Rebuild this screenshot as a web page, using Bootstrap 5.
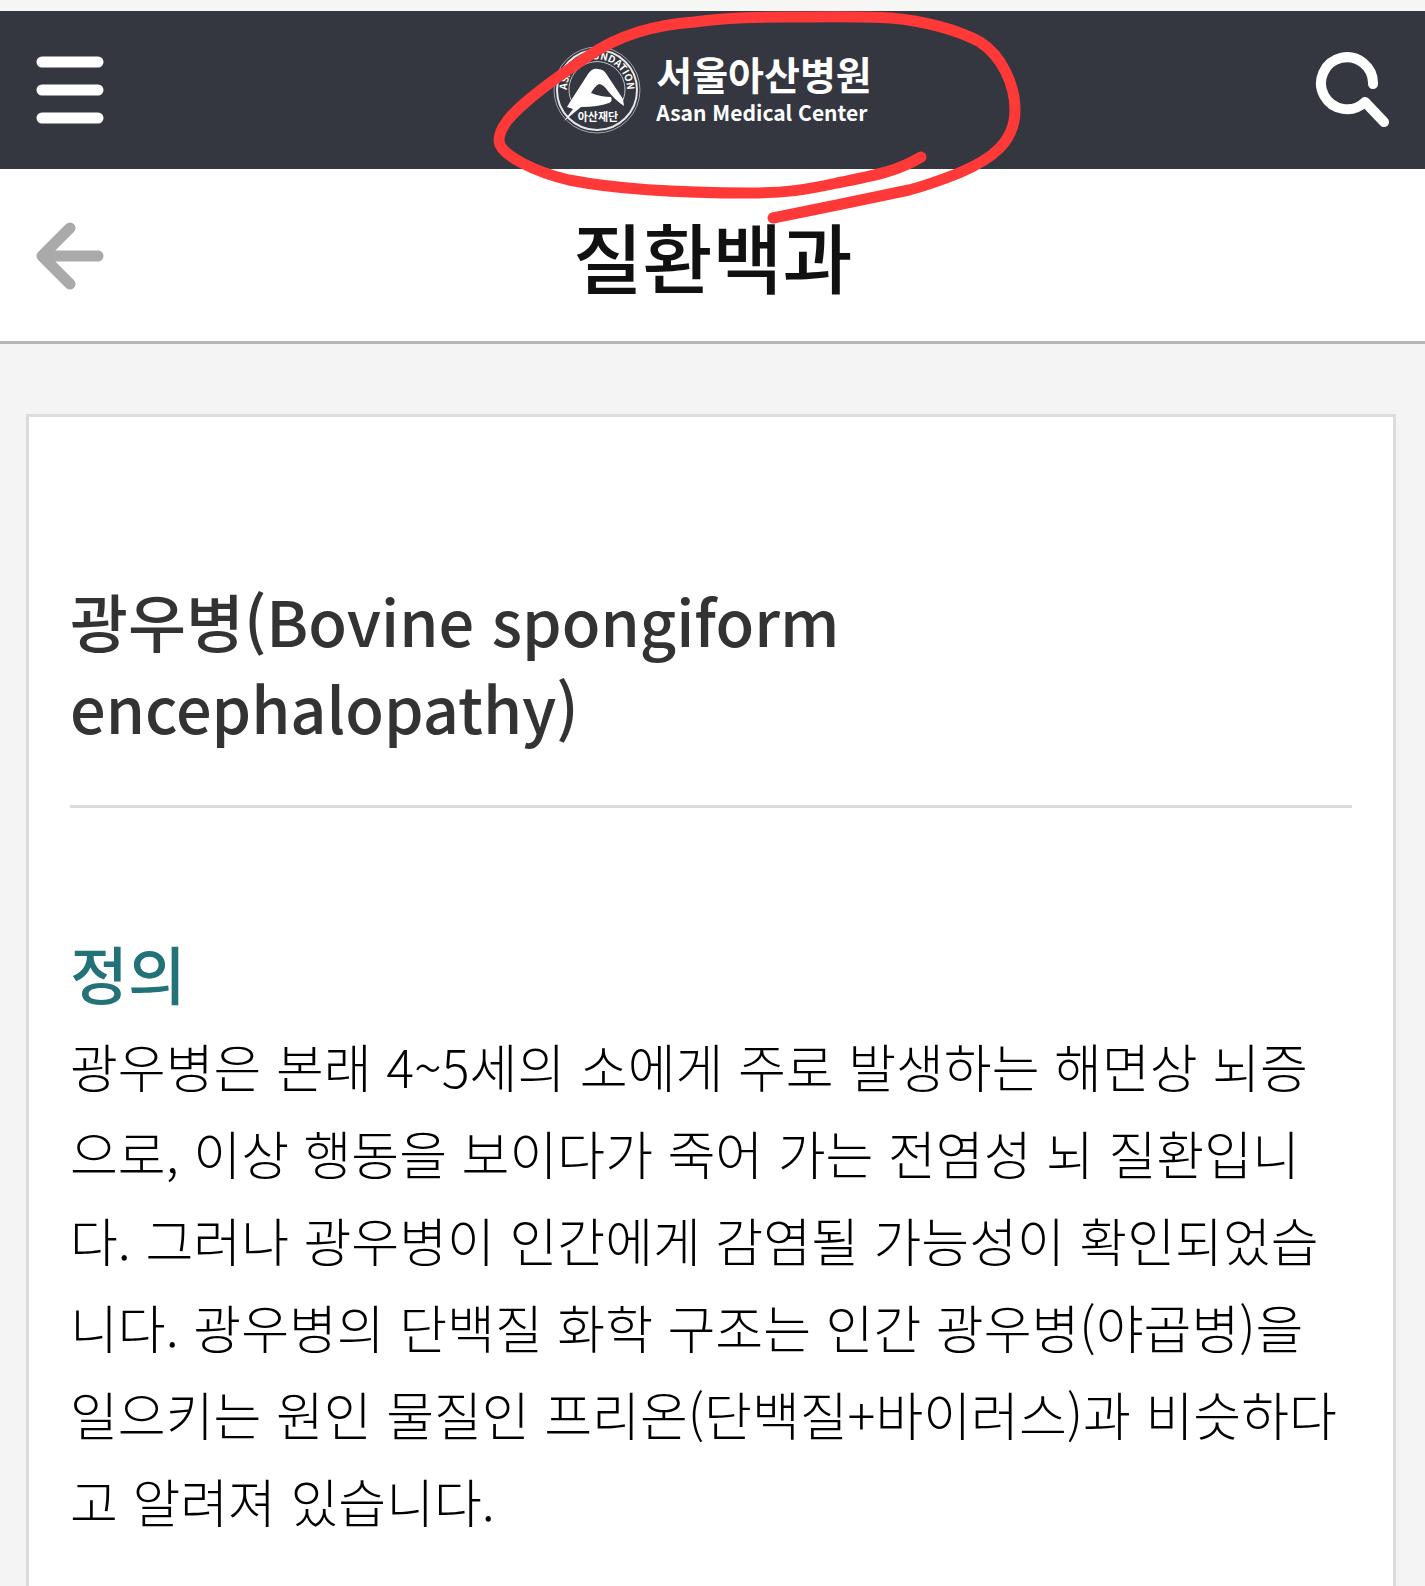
<!DOCTYPE html>
<html lang="ko">
<head>
<meta charset="utf-8">
<meta name="viewport" content="width=device-width, initial-scale=1">
<title>질환백과 | 서울아산병원</title>
<link href="https://cdn.jsdelivr.net/npm/bootstrap@5.3.0/dist/css/bootstrap.min.css" rel="stylesheet">
<style>
body{background:#f4f4f4;color:#000;font-family:"Noto Sans CJK KR","Noto Sans",sans-serif;overflow-x:hidden}
.site-top{background:#343740;height:169px;border-top:11px solid #f6f6f5;padding:0 36px}
.icon-btn{border:0;background:none;padding:0;line-height:0;display:block}
.brand{color:#fff;gap:15px}
.brand-ko{font-size:39px;line-height:44px;font-weight:700}
.brand-en{font-size:21px;line-height:34px;font-weight:700}
.page-bar{background:#fff;height:175px;border-bottom:3px solid #b5b6b6;padding:0 36px}
.page-title{font-size:76px;line-height:88px;font-weight:500;color:#111}
.side{flex:0 0 76px}
.entry{margin:70px 29px 0 26px;border:3px solid #dcdcdc;border-bottom:0;background:#fff;padding:159px 41px 60px}
.entry-title{font-size:63px;line-height:87px;font-weight:500;color:#333;padding-bottom:55px}
.entry-rule{border-top:3px solid #dcdcdc;opacity:1;margin:0 0 120px}
.entry-sub{font-size:63px;line-height:87px;font-weight:500;color:#237277;margin:0 0 7px}
.entry-text{font-size:52px;line-height:87px;font-weight:300;word-break:break-all;margin:0}
.pen-mark{position:absolute;top:0;left:50%;margin-left:-233px;pointer-events:none}
</style>
</head>
<body>
<header class="site-top d-flex align-items-center justify-content-between">
  <div class="side"><button class="icon-btn" type="button" aria-label="메뉴">
    <svg width="68" height="68" viewBox="0 0 68 68" stroke="#fff" stroke-width="11" stroke-linecap="round"><path d="M6 6H62M6 34H62M6 62H62"/></svg>
  </button></div>
  <a class="brand d-flex align-items-center text-decoration-none" href="#">
    <svg width="88" height="88" viewBox="0 0 88 88" aria-hidden="true">
      <defs><path id="ring" d="M15 51A30 30 0 1 1 73 51"/></defs>
      <circle cx="44" cy="44" r="43" fill="none" stroke="#a3a5ab" stroke-width="1"/>
      <circle cx="44" cy="44" r="40" fill="none" stroke="#e8e8ea" stroke-width="2"/>
      <path d="M18 54A28 28 0 1 1 70 54" fill="none" stroke="#c4c5c9" stroke-width="1"/>
      <text fill="#fff" font-size="10" font-weight="700" text-anchor="middle"><textPath href="#ring" startOffset="50%">ASAN FOUNDATION</textPath></text>
      <path d="M11 75L20 63L14 61L17 56L35 28Q39 22 45 23Q51 23 54 29L70 53L71 60Q62 54 55 45Q50 38 46 38Q42 40 38 47Q48 51 58 51Q60 55 56 57Q45 61 28 61Z" fill="#fff"/>
      <text x="45" y="75" fill="#fff" font-size="11" font-weight="700" text-anchor="middle">아산재단</text>
    </svg>
    <span class="d-flex flex-column"><span class="brand-ko">서울아산병원</span><span class="brand-en">Asan Medical Center</span></span>
  </a>
  <div class="side d-flex justify-content-end"><button class="icon-btn" type="button" aria-label="검색">
    <svg width="76" height="76" viewBox="0 0 76 76" fill="none" stroke="#fff" stroke-width="10" stroke-linecap="round" stroke-linejoin="round"><path d="M60 32A26 26 0 1 0 52 50L71 70"/></svg>
  </button></div>
</header>
<div class="page-bar d-flex align-items-center justify-content-between">
  <div class="side"><a class="icon-btn" href="#" aria-label="뒤로">
    <svg width="68" height="70" viewBox="0 -2 68 70" fill="none" stroke="#aaa" stroke-width="11" stroke-linecap="round" stroke-linejoin="round"><path d="M34 6L6 34L34 62M8 34H62"/></svg>
  </a></div>
  <h1 class="page-title m-0">질환백과</h1>
  <div class="side"></div>
</div>
<main class="entry">
  <h2 class="entry-title m-0">광우병(Bovine spongiform<br>encephalopathy)</h2>
  <hr class="entry-rule">
  <h3 class="entry-sub">정의</h3>
  <p class="entry-text">광우병은 본래 4~5세의 소에게 주로 발생하는 해면상 뇌증으로, 이상 행동을 보이다가 죽어 가는 전염성 뇌 질환입니다. 그러나 광우병이 인간에게 감염될 가능성이 확인되었습니다. 광우병의 단백질 화학 구조는 인간 광우병(야곱병)을 일으키는 원인 물질인 프리온(단백질+바이러스)과 비슷하다고 알려져 있습니다.</p>
</main>
<svg class="pen-mark" width="560" height="240" viewBox="480 0 560 240" fill="none" stroke="#ff3937" stroke-width="11" stroke-linecap="round" stroke-linejoin="round" aria-hidden="true"><path d="M921 157C900 170 878 175 837 183C805 190 785 193 751 193C690 193 620 190 569 180C535 172 500 155 499 141C499 127 512 114 526 102C548 83 566 71 587 57C620 34 655 25 694 22C722 18 750 17 784 17C820 17 860 16 891 18C925 21 958 30 980 42C1002 56 1015 85 1015 110C1015 142 992 159 959 173C944 179 928 185 909 190L837 205L773 218"/></svg>
<script src="https://cdn.jsdelivr.net/npm/bootstrap@5.3.0/dist/js/bootstrap.bundle.min.js"></script>
</body>
</html>
